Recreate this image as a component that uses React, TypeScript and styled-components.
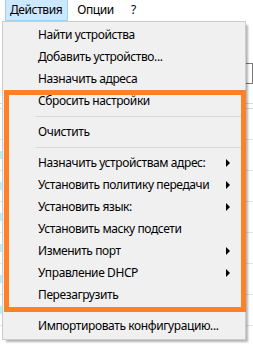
import React from "react"
import styled, { createGlobalStyle } from "styled-components"

const GlobalStyle = createGlobalStyle`
    html, body {
        margin: 0;
        padding: 0;
        background: #ffffff;
    }
    body {
        font-family: "Noto Sans", "Liberation Sans", sans-serif;
        font-size: 12px;
        letter-spacing: -0.4px;
        color: #000;
    }
`

type Entry =
    | { kind: "item"; label: string; sub?: boolean }
    | { kind: "sep" }

const entries: Entry[] = [
    { kind: "item", label: "Найти устройства" },
    { kind: "item", label: "Добавить устройство..." },
    { kind: "item", label: "Назначить адреса" },
    { kind: "item", label: "Сбросить настройки" },
    { kind: "sep" },
    { kind: "item", label: "Очистить" },
    { kind: "sep" },
    { kind: "item", label: "Назначить устройствам адрес:", sub: true },
    { kind: "item", label: "Установить политику передачи", sub: true },
    { kind: "item", label: "Установить язык:", sub: true },
    { kind: "item", label: "Установить маску подсети" },
    { kind: "item", label: "Изменить порт", sub: true },
    { kind: "item", label: "Управление DHCP", sub: true },
    { kind: "item", label: "Перезагрузить" },
    { kind: "sep" },
    { kind: "item", label: "Импортировать конфигурацию..." },
]

const App: React.FC = () => {
    return (
        <Window>
            <GlobalStyle />
            <MenuBar>
                <MenuBarItem $active $ml={5}>Действия</MenuBarItem>
                <MenuBarItem $ml={4}>Опции</MenuBarItem>
                <MenuBarItem $ml={6}>?</MenuBarItem>
            </MenuBar>
            <Content>
                <Toolbar>
                    <ToolField />
                </Toolbar>
                <Table>
                    {[0, 1, 2, 3, 4, 5, 6].map((i) => (
                        <TableRow key={i}>
                            <Cell $mark={i > 0} />
                        </TableRow>
                    ))}
                </Table>
            </Content>
            <Dropdown>
                {entries.map((e, i) =>
                    e.kind === "sep" ? (
                        <Separator key={i} />
                    ) : (
                        <Item key={i}>
                            <span>{e.label}</span>
                            {e.sub && <Arrow />}
                        </Item>
                    )
                )}
            </Dropdown>
            <Highlight />
        </Window>
    )
}

const Window = styled.div`
    position: relative;
    width: 253px;
    height: 349px;
    overflow: hidden;
    background: #ffffff;
`

const MenuBar = styled.div`
    display: flex;
    height: 21px;
    background: #ffffff;
`

const MenuBarItem = styled.div<{ $active?: boolean; $ml: number }>`
    margin-left: ${(p) => p.$ml}px;
    height: 20px;
    line-height: 19px;
    padding: 0 5px 0 4px;
    border: 1px solid ${(p) => (p.$active ? "#99d1ff" : "transparent")};
    border-top: none;
    background: ${(p) => (p.$active ? "#cce8ff" : "transparent")};
`

const Content = styled.div`
    display: flex;
    flex-direction: column;
`

const Toolbar = styled.div`
    height: 40px;
    border-bottom: 1px solid #d9d9d9;
    display: flex;
    justify-content: flex-end;
    align-items: flex-start;
    padding-top: 42px;
`

const ToolField = styled.div`
    width: 20px;
    height: 19px;
    border: 1px solid #7a7a7a;
    background: #fff;
`

const Table = styled.div`
    margin-top: 4px;
    display: flex;
    flex-direction: column;
    border-top: 1px solid #d9d9d9;
`

const TableRow = styled.div`
    height: 30px;
    border-bottom: 1px solid #e5e5e5;
    display: flex;
    align-items: center;
`

const Cell = styled.div<{ $mark: boolean }>`
    width: 3px;
    height: 8px;
    background: ${(p) => (p.$mark ? "#bdeef5" : "transparent")};
`

const Dropdown = styled.div`
    position: absolute;
    left: 2px;
    top: 21px;
    width: 244px;
    box-sizing: border-box;
    padding: 2px;
    background: #f0f0f0;
    border: 1px solid #cccccc;
    box-shadow: 3px 3px 2px -1px rgba(0, 0, 0, 0.3);
`

const Item = styled.div`
    height: 22px;
    line-height: 22px;
    padding-left: 33px;
    padding-right: 13px;
    display: flex;
    align-items: center;
    justify-content: space-between;
    white-space: nowrap;
`

const Arrow = styled.div`
    width: 0;
    height: 0;
    border-top: 4px solid transparent;
    border-bottom: 4px solid transparent;
    border-left: 4px solid #000;
`

const Separator = styled.div`
    height: 9px;
    display: flex;
    align-items: center;
    padding-left: 31px;
    padding-right: 2px;
    &::after {
        content: "";
        flex: 1;
        height: 1px;
        background: #d7d7d7;
    }
`

const Highlight = styled.div`
    position: absolute;
    left: 4px;
    top: 90px;
    width: 242px;
    height: 222px;
    box-sizing: border-box;
    border: 5px solid #ff8026;
    pointer-events: none;
`

export default App
